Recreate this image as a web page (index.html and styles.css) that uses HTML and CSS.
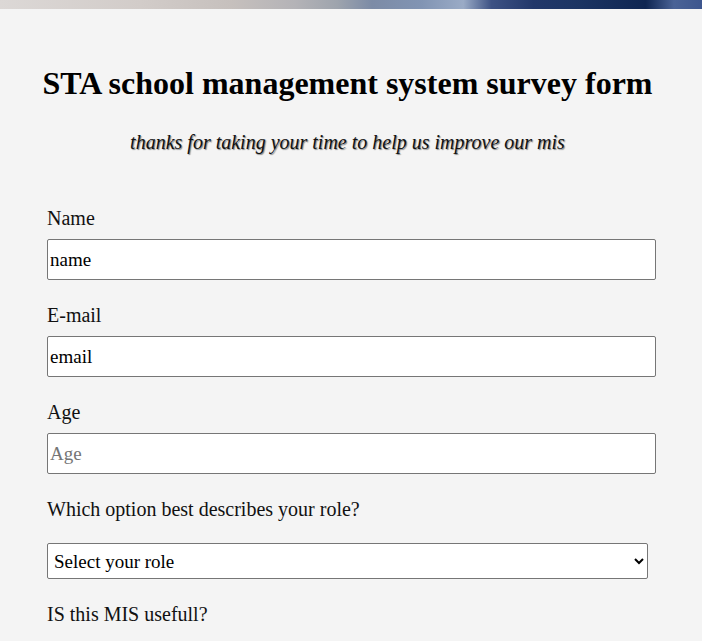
FILE: index.html
```html
<!DOCTYPE html>
<html lang="en">
<head>
<meta charset="utf-8">
<title>STA survey form</title>
<link rel="stylesheet" href="styles.css">
</head>
<body>
<div class="banner"></div>
<main class="page">
  <header class="intro">
    <h1 class="title">STA school management system survey form</h1>
    <p class="description">thanks for taking your time to help us improve our mis</p>
  </header>
  <form class="survey">
    <div class="group">
      <label class="label" for="name">Name</label>
      <input class="field" id="name" type="text" value="name">
    </div>
    <div class="group">
      <label class="label" for="email">E-mail</label>
      <input class="field" id="email" type="email" value="email">
    </div>
    <div class="group">
      <label class="label" for="age">Age</label>
      <input class="field" id="age" type="number" placeholder="Age">
    </div>
    <div class="group group-select">
      <label class="label" for="role">Which option best describes your role?</label>
      <select class="dropdown" id="role">
        <option>Select your role</option>
        <option>Student</option>
        <option>Teacher</option>
        <option>Parent</option>
      </select>
    </div>
    <div class="group">
      <p class="label">IS this MIS usefull?</p>
    </div>
  </form>
</main>
</body>
</html>
```
FILE: styles.css
```css
html, body {
  margin: 0;
  padding: 0;
}
body {
  background: #f4f4f4;
  font-family: "Liberation Serif", "Times New Roman", serif;
  color: #111;
}
.banner {
  height: 9px;
  background: linear-gradient(90deg,
    #dcd8d6 0%,
    #d2ccc9 20%,
    #c6c0bd 33%,
    #b4b3b7 42%,
    #9ea4ad 48%,
    #7c8ba6 53%,
    #8194b3 60%,
    #9aabc6 66%,
    #3d5284 70%,
    #22386a 76%,
    #1c3563 82%,
    #0f2652 92%,
    #4a6396 96%,
    #3d568e 100%);
}
.intro {
  padding: 0 7px 0 0;
}
.title {
  margin: 0;
  padding-top: 56px;
  text-align: center;
  white-space: nowrap;
  font-size: 32px;
  font-weight: bold;
  line-height: 37px;
  color: #000;
}
.description {
  margin: 0;
  padding-top: 29px;
  text-align: center;
  font-style: italic;
  font-size: 20px;
  line-height: 23px;
  text-shadow: 1px 1px 1px #888;
  color: #111;
}
.survey {
  padding: 53px 46px 0 47px;
}
.group {
  display: flex;
  flex-direction: column;
  align-items: flex-start;
  gap: 9px;
  margin-bottom: 24px;
}
.group-select {
  gap: 22px;
}
.label {
  margin: 0;
  font-size: 20px;
  line-height: 23px;
  color: #111;
}
.field {
  box-sizing: border-box;
  width: 609px;
  height: 41px;
  margin: 0;
  padding: 0 2px;
  border: 1px solid #767676;
  border-radius: 2px;
  background: #fff;
  font-family: "Liberation Serif", "Times New Roman", serif;
  font-size: 19px;
  color: #000;
}
.field::placeholder {
  color: #757575;
}
.field::-webkit-outer-spin-button,
.field::-webkit-inner-spin-button {
  -webkit-appearance: none;
  margin: 0;
}
.dropdown {
  box-sizing: border-box;
  width: 601px;
  height: 36px;
  margin: 0;
  padding: 0 2px;
  border: 1px solid #767676;
  border-radius: 2px;
  background: #fff;
  font-family: "Liberation Serif", "Times New Roman", serif;
  font-size: 19px;
  color: #000;
}
```
